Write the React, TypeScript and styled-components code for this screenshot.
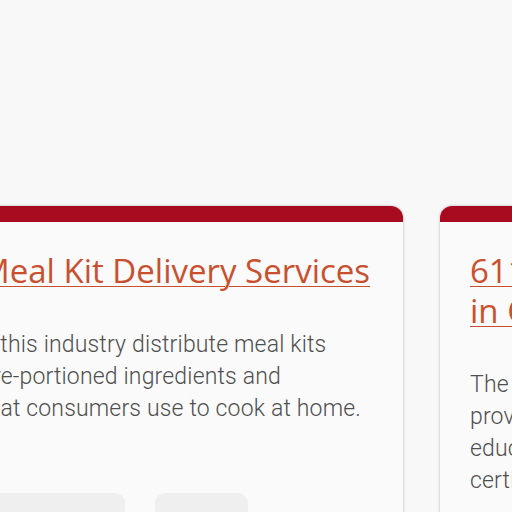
import React from "react";
import styled, { createGlobalStyle } from "styled-components";

const GlobalStyle = createGlobalStyle`
  html, body {
    margin: 0;
    padding: 0;
    background: #f8f8f8;
    overflow: hidden;
  }
`;

const Page = styled.div`
  width: 512px;
  height: 512px;
  overflow: hidden;
  padding-top: 206px;
  box-sizing: border-box;
`;

const Track = styled.div`
  display: flex;
  gap: 37px;
  margin-left: -50px;
`;

const Card = styled.article`
  flex: 0 0 453px;
  background: #fafafa;
  border-radius: 12px;
  overflow: hidden;
  box-shadow: 0 0 3px rgba(0, 0, 0, 0.28);
  display: flex;
  flex-direction: column;
`;

const CardBar = styled.div`
  flex: 0 0 16px;
  background: #a80a1f;
`;

const CardBody = styled.div`
  padding: 29px 30px 30px;
  display: flex;
  flex-direction: column;
`;

const Title = styled.a`
  font-family: "Open Sans", "Noto Sans", sans-serif;
  font-size: 33px;
  line-height: 40px;
  color: #c9502f;
  text-decoration: underline;
  text-decoration-thickness: 1px;
  text-underline-offset: 3px;
  margin: 0 0 38px;
  display: block;
  white-space: nowrap;
`;

const Desc = styled.p`
  font-family: Roboto, "Liberation Sans", sans-serif;
  font-size: 23px;
  font-weight: 300;
  letter-spacing: 0.17px;
  line-height: 32px;
  color: #4f4f4f;
  margin: 0;
  white-space: nowrap;
`;

const Tags = styled.div`
  display: flex;
  gap: 30px;
  margin-top: 68px;
`;

const Tag = styled.span<{ $w: number }>`
  width: ${(p) => p.$w}px;
  height: 48px;
  border-radius: 10px;
  background: #efeff0;
  box-sizing: border-box;
  padding: 20px 16px 0;
  font-family: Roboto, "Liberation Sans", sans-serif;
  font-size: 15px;
  color: #666;
`;

export default function App() {
  return (
    <>
      <GlobalStyle />
      <Page>
        <Track>
          <Card>
            <CardBar />
            <CardBody>
              <Title href="#">Meal Kit Delivery Services</Title>
              <Desc>
                A this industry distribute meal kits
                <br />
                pre-portioned ingredients and
                <br />
                that consumers use to cook at home.
              </Desc>
              <Tags>
                <Tag $w={145}>Food</Tag>
                <Tag $w={93}>US</Tag>
              </Tags>
            </CardBody>
          </Card>
          <Card>
            <CardBar />
            <CardBody>
              <Title href="#">
                6114 Business Schools
                <br />
                in Canada
              </Title>
              <Desc>
                The firms in this industry
                <br />
                provide professional training,
                <br />
                education and
                <br />
                certification programs.
              </Desc>
              <Tags>
                <Tag $w={145}>Education</Tag>
                <Tag $w={93}>CA</Tag>
              </Tags>
            </CardBody>
          </Card>
        </Track>
      </Page>
    </>
  );
}
